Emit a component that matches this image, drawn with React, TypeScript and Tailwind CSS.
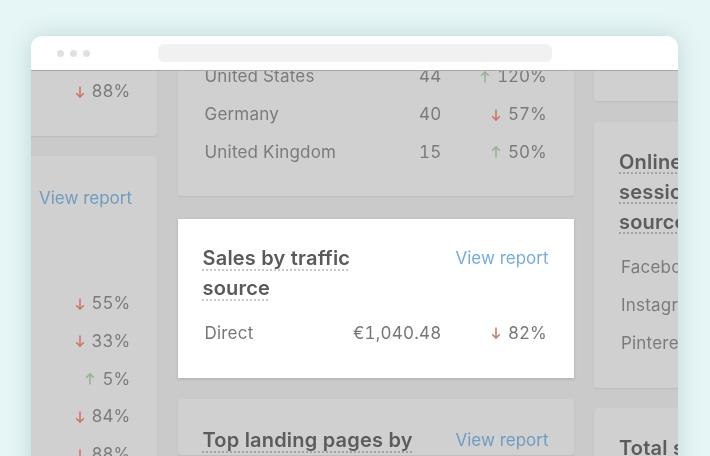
import React from "react";

function Arrow({ dir, dim }: { dir: "up" | "down"; dim?: boolean }) {
  const color =
    dir === "down" ? (dim ? "#cf7767" : "#c9806f") : "#93b592";
  return (
    <svg width="10" height="14" viewBox="0 0 10 14" fill="none" className="shrink-0">
      {dir === "down" ? (
        <path d="M5 1.5V12M1.2 8.2L5 12L8.8 8.2" stroke={color} strokeWidth="1.6" />
      ) : (
        <path d="M5 12.5V2M1.2 5.8L5 2L8.8 5.8" stroke={color} strokeWidth="1.6" />
      )}
    </svg>
  );
}

function Row({
  name,
  value,
  pct,
  dir,
  dim = true,
  wide,
}: {
  name?: string;
  value?: string;
  pct?: string;
  dir?: "up" | "down";
  dim?: boolean;
  wide?: boolean;
}) {
  return (
    <div
      className={`flex h-[37.8px] items-center text-[17px] tabular-nums px-[2px] ${
        dim ? "text-[#7b7b7b]" : "text-[#777777]"
      }`}
    >
      <span className="flex-1 whitespace-nowrap tracking-[0.2px]">{name}</span>
      <span className="tracking-[0.2px]">{value}</span>
      {pct && dir ? (
        <span
          className={`flex items-center justify-end gap-[7px] ${
            wide ? "w-[105px]" : "w-[95px]"
          }`}
        >
          <Arrow dir={dir} dim={dim} />
          <span className="tracking-[-0.1px]">{pct}</span>
        </span>
      ) : null}
    </div>
  );
}

function Title({ children, dim = true }: { children: React.ReactNode; dim?: boolean }) {
  return (
    <h3
      className={`w-[225px] text-[20px] leading-[30px] font-semibold tracking-[0.2px] ${
        dim ? "text-[#5c5c5c]" : "text-[#5a5a5a]"
      }`}
    >
      <span
        className={`underline decoration-dotted decoration-[1.5px] underline-offset-[4px] ${
          dim ? "decoration-[#a2a2a2]" : "decoration-[#c8c8c8]"
        }`}
      >
        {children}
      </span>
    </h3>
  );
}

function ViewReport({ dim = true }: { dim?: boolean }) {
  return (
    <span
      className={`whitespace-nowrap text-[17px] leading-[30px] ${
        dim ? "text-[#6f9cc0]" : "text-[#74addb]"
      }`}
    >
      View report
    </span>
  );
}

const dimCard =
  "w-[396px] shrink-0 rounded-[4px] bg-[#d0d0d0] shadow-[0_1px_2px_rgba(0,0,0,0.08)] px-[25px]";

export default function App() {
  return (
    <div
      className="h-[456px] w-[710px] overflow-hidden bg-[#e6f5f5] pl-[31px] pt-[36px]"
      style={{ fontFamily: "Inter, 'Noto Sans', sans-serif" }}
    >
      <div className="flex h-[440px] w-[647px] flex-col overflow-hidden rounded-t-[12px] bg-white shadow-[0_0_22px_rgba(90,140,140,0.28)] blur-[0.3px]">
        <div className="z-10 flex h-[35px] shrink-0 items-center border-b border-[#a8a8a8] bg-white pl-[26px]">
          <div className="flex gap-[6px]">
            <span className="size-[7px] rounded-full bg-[#e0e0e0]" />
            <span className="size-[7px] rounded-full bg-[#e0e0e0]" />
            <span className="size-[7px] rounded-full bg-[#e0e0e0]" />
          </div>
          <div className="ml-[68px] h-[18px] w-[394px] rounded-[6px] bg-[#f1f1f1]" />
        </div>

        <div className="ml-[-270px] flex w-[1254px] flex-1 gap-[20.5px] overflow-hidden bg-[#cacaca]">
          {/* left column */}
          <div className="flex w-[396px] shrink-0 flex-col gap-[20px]">
            <div className={`${dimCard} -mt-[20px] pt-[22px] pb-[25px]`}>
              <div className="flex h-[37.8px] items-center justify-end px-[2px] text-[17px] tabular-nums text-[#7b7b7b]">
                <span className="mr-[7px]" aria-hidden="true" />
                <Arrow dir="down" dim />
                <span className="ml-[7px] tracking-[-0.1px]">88%</span>
              </div>
            </div>
            <div className={`${dimCard} pt-[27px]`}>
              <div className="flex justify-end">
                <ViewReport />
              </div>
              <div className="mt-[72px]">
                <Row pct="55%" dir="down" />
                <Row pct="33%" dir="down" />
                <Row pct="5%" dir="up" />
                <Row pct="84%" dir="down" />
                <Row pct="88%" dir="down" />
              </div>
            </div>
          </div>

          {/* middle column */}
          <div className="flex w-[396px] shrink-0 flex-col gap-[21px]">
            <div className={`${dimCard} -mt-[19px] pt-[6px] pb-[25px]`}>
              <Row name="United States" value="44" pct="120%" dir="up" wide />
              <Row name="Germany" value="40" pct="57%" dir="down" wide />
              <Row name="United Kingdom" value="15" pct="50%" dir="up" wide />
            </div>
            <div className="mt-[2px] w-[396px] shrink-0 bg-white px-[25px] pt-[24px] pb-[26px] shadow-[0_1px_3px_rgba(0,0,0,0.15)]">
              <div className="flex items-start justify-between">
                <Title dim={false}>
                  Sales by traffic
                  <br />
                  source
                </Title>
                <ViewReport dim={false} />
              </div>
              <div className="mt-[11px]">
                <Row name="Direct" value="€1,040.48" pct="82%" dir="down" dim={false} wide />
              </div>
            </div>
            <div className={`${dimCard} pt-[26px]`}>
              <div className="flex items-start justify-between">
                <Title>Top landing pages by</Title>
                <ViewReport />
              </div>
            </div>
          </div>

          {/* right column */}
          <div className="flex w-[396px] shrink-0 flex-col gap-[20.5px]">
            <div className={`${dimCard} -mt-[10px] h-[40px]`} />
            <div className={`${dimCard} pt-[25px] pb-[25.5px]`}>
              <Title>
                Online store
                <br />
                sessions by traffic
                <br />
                source
              </Title>
              <div className="mt-[12.5px]">
                <Row name="Facebook" />
                <Row name="Instagram" />
                <Row name="Pinterest" />
              </div>
            </div>
            <div className={`${dimCard} pt-[25px]`}>
              <Title>Total sales</Title>
            </div>
          </div>
        </div>
      </div>
    </div>
  );
}
